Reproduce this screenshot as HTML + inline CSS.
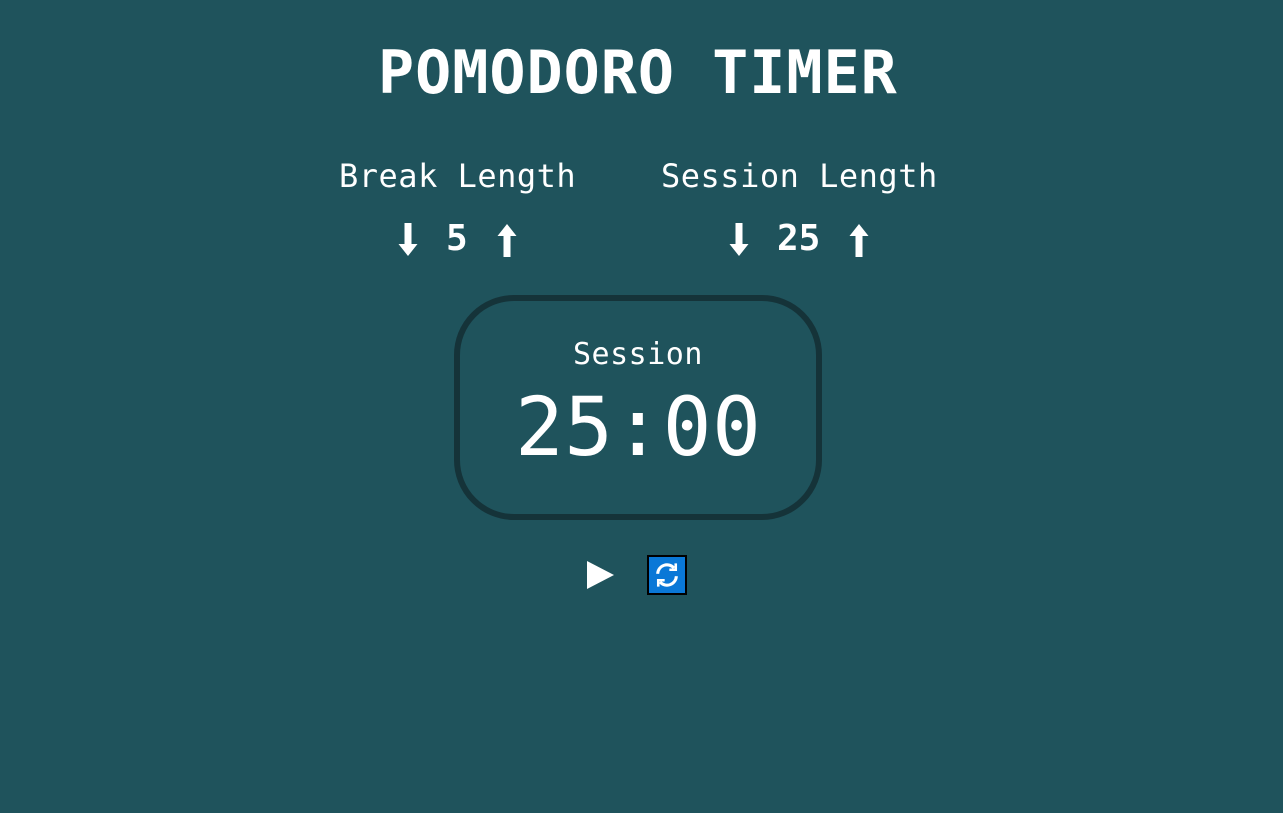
<!DOCTYPE html>
<html><head><style>
body{margin:0;width:1283px;height:813px;background:#1f535c;color:#fff;font-family:"DejaVu Sans Mono","Liberation Mono",monospace;position:relative;overflow:hidden}
.a{position:absolute;white-space:nowrap;line-height:1}
</style></head><body>
<div class="a" style="left:378px;top:43px;font-size:60px;font-weight:bold;letter-spacing:1px">POMODORO TIMER</div>
<div class="a" style="left:339px;top:160px;font-size:32px;letter-spacing:0.5px">Break Length</div>
<div class="a" style="left:661px;top:160px;font-size:32px;letter-spacing:0.5px">Session Length</div>
<svg class="a" style="left:398px;top:223px" width="20" height="34" viewBox="0 0 20 34"><path d="M6.5 0h7v21h6L10 33 0.5 21h6z" fill="#fff"/></svg>
<div class="a" style="left:446px;top:221px;font-size:36px;font-weight:bold">5</div>
<svg class="a" style="left:497px;top:223px" width="20" height="34" viewBox="0 0 20 34"><path d="M6.5 34h7V13h6L10 1 0.5 13h6z" fill="#fff"/></svg>
<svg class="a" style="left:729px;top:223px" width="20" height="34" viewBox="0 0 20 34"><path d="M6.5 0h7v21h6L10 33 0.5 21h6z" fill="#fff"/></svg>
<div class="a" style="left:777px;top:221px;font-size:36px;font-weight:bold">25</div>
<svg class="a" style="left:849px;top:223px" width="20" height="34" viewBox="0 0 20 34"><path d="M6.5 34h7V13h6L10 1 0.5 13h6z" fill="#fff"/></svg>
<div class="a" style="left:454px;top:295px;width:356px;height:213px;border:6px solid #153339;border-radius:60px"></div>
<div class="a" style="left:573px;top:340px;font-size:30px;letter-spacing:0.5px">Session</div>
<div class="a" style="left:515px;top:388px;font-size:81px;letter-spacing:0.5px">25:00</div>
<svg class="a" style="left:587px;top:561px" width="27" height="28"><path d="M0 0L27 14 0 28z" fill="#fff"/></svg>
<div class="a" style="left:647px;top:555px;width:36px;height:36px;background:#0a78d7;border:2px solid #000"></div>
<svg class="a" style="left:653px;top:561px" width="28" height="28" viewBox="0 0 24 24" fill="none" stroke="#fff" stroke-width="2.6"><path d="M4 11a8 8 0 0 1 14-5"/><path d="M20 13a8 8 0 0 1-14 5"/><path d="M19.5 2v5.5h-5.5M4.5 22v-5.5h5.5" stroke-width="2.2"/></svg>
</body></html>
